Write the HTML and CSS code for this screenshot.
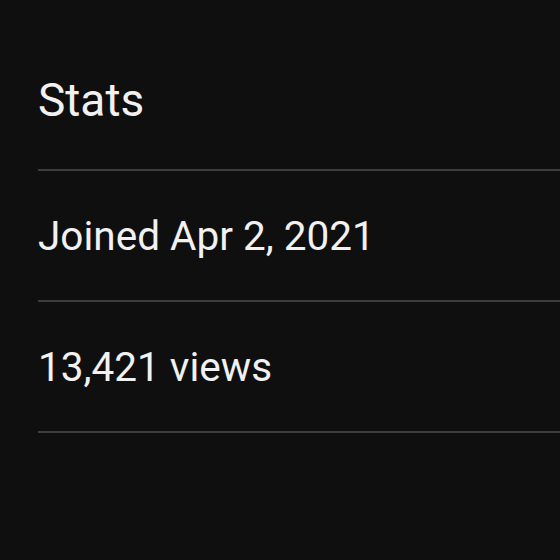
FILE: index.html
```html
<!DOCTYPE html>
<html lang="en">
<head>
<meta charset="utf-8">
<title>Stats</title>
<link rel="stylesheet" href="styles.css">
</head>
<body>
<section class="stats">
  <h2 class="stats-title">Stats</h2>
  <ul class="stats-list">
    <li class="stats-item">Joined Apr 2, 2021</li>
    <li class="stats-item">13,421 views</li>
  </ul>
</section>
</body>
</html>
```

FILE: styles.css
```css
html, body {
  margin: 0;
  padding: 0;
  background: #0f0f0f;
}
body {
  width: 560px;
  height: 560px;
  overflow: hidden;
  font-family: Roboto, "Liberation Sans", sans-serif;
  color: #f1f1f1;
}
.stats {
  padding: 74px 0 0 38px;
}
.stats-title {
  margin: 0;
  font-size: 46px;
  font-weight: 400;
  line-height: 52px;
  padding-bottom: 43px;
  border-bottom: 2px solid #3e3e3e;
}
.stats-list {
  list-style: none;
  margin: 0;
  padding: 0;
}
.stats-item {
  font-size: 40.5px;
  line-height: 46px;
  padding: 42px 0 41px;
  border-bottom: 2px solid #3e3e3e;
}
```
